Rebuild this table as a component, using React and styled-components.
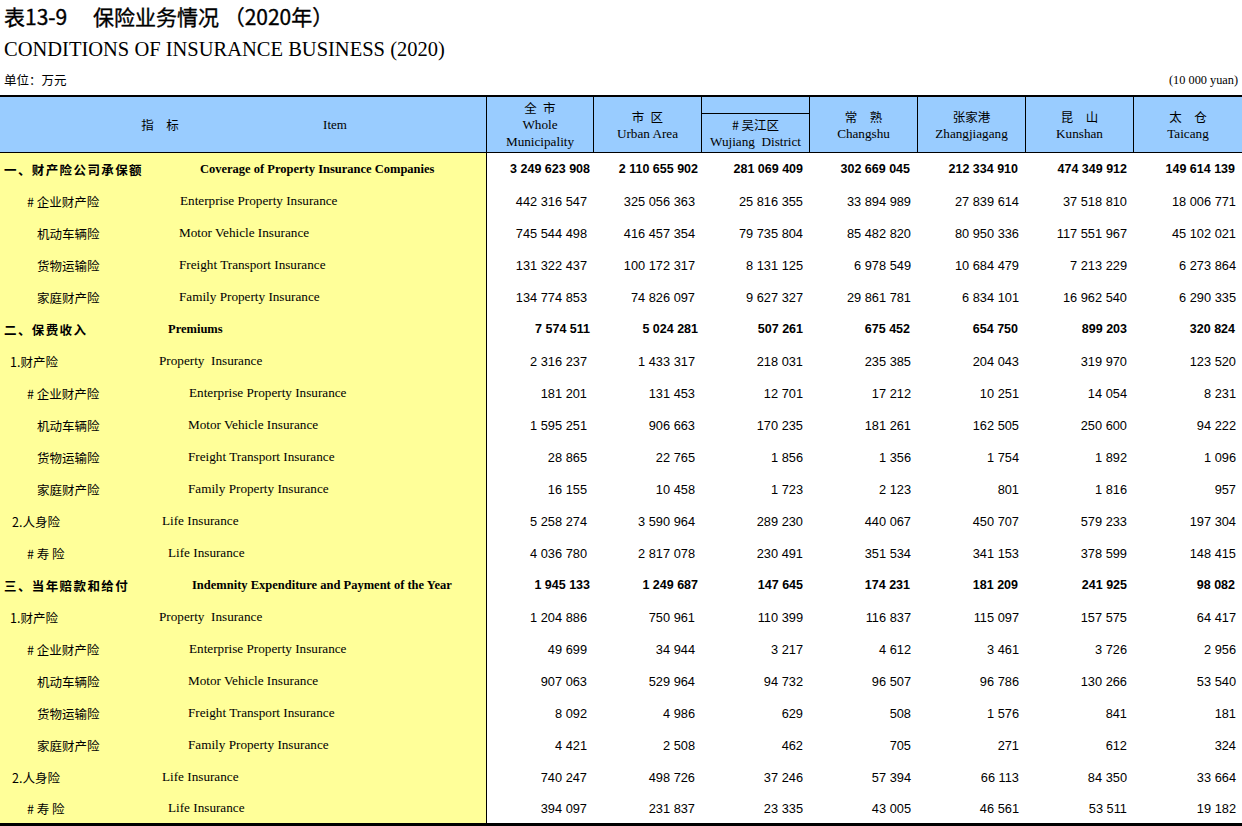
import React from "react";
import styled, { createGlobalStyle } from "styled-components";

const CJK = `"Noto Sans CJK SC", "Noto Sans", sans-serif`;
const SERIF = `"Liberation Serif", "Times New Roman", serif`;
const SANS = `"Liberation Sans", Arial, sans-serif`;
const COLS = "487px 106px 108px 108px 108px 108px 108px 109px";

const GlobalStyle = createGlobalStyle`
  html, body { margin: 0; padding: 0; background: #fff; }
  body { font-family: ${SANS}; color: #000; overflow: hidden; }
`;

const Page = styled.div`
  width: 1242px;
  height: 826px;
  overflow: hidden;
`;

const TitleCn = styled.h1`
  margin: 0;
  height: 32px;
  box-sizing: border-box;
  padding: 5px 0 0 4px;
  font: 400 21px/22px ${CJK};
  -webkit-text-stroke: 0.35px #000;
  white-space: pre;
`;

const TitleEn = styled.h2`
  margin: 0;
  height: 31px;
  box-sizing: border-box;
  padding: 3px 0 0 4px;
  font: 400 20.5px/28px ${SERIF};
`;

const UnitRow = styled.div`
  display: flex;
  justify-content: space-between;
  height: 32px;
  box-sizing: border-box;
  padding: 9px 4px 0 4px;
  line-height: 16px;
`;

const UnitCn = styled.span`
  font-family: ${CJK};
  font-size: 12.5px;
`;

const UnitEn = styled.span`
  font-family: ${SERIF};
  font-size: 12.3px;
`;

const Table = styled.div`
  border-top: 2px solid #000;
  border-bottom: 3px solid #000;
`;

const HeadRow = styled.div`
  display: grid;
  grid-template-columns: ${COLS};
  height: 56px;
  box-sizing: border-box;
  border-bottom: 1px solid #000;
  background: #99ccff;
`;

const HeadLabel = styled.div`
  display: flex;
  align-items: center;
  border-right: 1px solid #000;
`;

const HeadLabelCn = styled.span`
  flex: 0 0 320px;
  text-align: center;
  font-family: ${CJK};
  font-size: 12.5px;
  white-space: pre;
`;

const HeadLabelEn = styled.span`
  flex: 0 0 30px;
  text-align: center;
  font-family: ${SERIF};
  font-size: 13px;
`;

const HeadCol = styled.div`
  display: flex;
  flex-direction: column;
  align-items: center;
  justify-content: center;
  text-align: center;
  line-height: 17px;
  border-left: ${(p) => (p.$first ? "none" : "1px solid #000")};
`;

const HeadSplit = styled.div`
  display: flex;
  flex-direction: column;
  border-left: 1px solid #000;
`;

const SplitTop = styled.div`
  height: 16px;
  border-bottom: 1px solid #000;
`;

const SplitBottom = styled.div`
  flex: 1;
  display: flex;
  flex-direction: column;
  align-items: center;
  justify-content: center;
  line-height: 17px;
`;

const HeadCn = styled.span`
  font-family: ${CJK};
  font-size: 12.5px;
  white-space: pre;
`;

const HeadEn = styled.span`
  font-family: ${SERIF};
  font-size: 13.2px;
  white-space: pre;
`;

const BodyRow = styled.div`
  display: grid;
  grid-template-columns: ${COLS};
  height: ${(p) => (p.$last ? 30 : 32)}px;
  font-weight: ${(p) => (p.$bold ? 700 : 400)};
`;

const LabelCell = styled.div`
  display: flex;
  align-items: center;
  background: #ffff99;
  border-right: 1px solid #000;
  white-space: pre;
`;

const CnLabel = styled.span`
  box-sizing: border-box;
  flex: 0 0 ${(p) => p.$en}px;
  padding-left: ${(p) => p.$indent}px;
  font-family: ${CJK};
  font-size: 12.5px;
  letter-spacing: ${(p) => (p.$bold ? "1.4px" : "0")};
`;

const EnLabel = styled.span`
  font-family: ${SERIF};
  font-size: ${(p) => (p.$bold ? "12.5px" : "13.2px")};
`;

const NumCell = styled.div`
  display: flex;
  align-items: center;
  justify-content: flex-end;
  padding-right: ${(p) => p.$pad}px;
  font-family: ${SANS};
  font-size: ${(p) => (p.$bold ? "12.5px" : "12.8px")};
  white-space: pre;
`;

const PADS = [6, 6, 6, 6, 6, 6, 6];
const BOLD_PADS = [3, 3, 6, 7, 7, 6, 7];

const ROWS = [
  { cn: "一、财产险公司承保额", en: "Coverage of Property Insurance Companies", ci: 4, ex: 200, bold: true,
    v: ["3 249 623 908", "2 110 655 902", "281 069 409", "302 669 045", "212 334 910", "474 349 912", "149 614 139"] },
  { cn: "# 企业财产险", en: "Enterprise Property Insurance", ci: 27, ex: 180,
    v: ["442 316 547", "325 056 363", "25 816 355", "33 894 989", "27 839 614", "37 518 810", "18 006 771"] },
  { cn: "机动车辆险", en: "Motor Vehicle Insurance", ci: 37, ex: 179,
    v: ["745 544 498", "416 457 354", "79 735 804", "85 482 820", "80 950 336", "117 551 967", "45 102 021"] },
  { cn: "货物运输险", en: "Freight Transport Insurance", ci: 37, ex: 179,
    v: ["131 322 437", "100 172 317", "8 131 125", "6 978 549", "10 684 479", "7 213 229", "6 273 864"] },
  { cn: "家庭财产险", en: "Family Property Insurance", ci: 37, ex: 179,
    v: ["134 774 853", "74 826 097", "9 627 327", "29 861 781", "6 834 101", "16 962 540", "6 290 335"] },
  { cn: "二、保费收入", en: "Premiums", ci: 4, ex: 168, bold: true,
    v: ["7 574 511", "5 024 281", "507 261", "675 452", "654 750", "899 203", "320 824"] },
  { cn: "1.财产险", en: "Property  Insurance", ci: 10, ex: 159,
    v: ["2 316 237", "1 433 317", "218 031", "235 385", "204 043", "319 970", "123 520"] },
  { cn: "# 企业财产险", en: "Enterprise Property Insurance", ci: 27, ex: 189,
    v: ["181 201", "131 453", "12 701", "17 212", "10 251", "14 054", "8 231"] },
  { cn: "机动车辆险", en: "Motor Vehicle Insurance", ci: 37, ex: 188,
    v: ["1 595 251", "906 663", "170 235", "181 261", "162 505", "250 600", "94 222"] },
  { cn: "货物运输险", en: "Freight Transport Insurance", ci: 37, ex: 188,
    v: ["28 865", "22 765", "1 856", "1 356", "1 754", "1 892", "1 096"] },
  { cn: "家庭财产险", en: "Family Property Insurance", ci: 37, ex: 188,
    v: ["16 155", "10 458", "1 723", "2 123", "801", "1 816", "957"] },
  { cn: "2.人身险", en: "Life Insurance", ci: 12, ex: 162,
    v: ["5 258 274", "3 590 964", "289 230", "440 067", "450 707", "579 233", "197 304"] },
  { cn: "# 寿 险", en: "Life Insurance", ci: 27, ex: 168,
    v: ["4 036 780", "2 817 078", "230 491", "351 534", "341 153", "378 599", "148 415"] },
  { cn: "三、当年赔款和给付", en: "Indemnity Expenditure and Payment of the Year", ci: 4, ex: 192, bold: true,
    v: ["1 945 133", "1 249 687", "147 645", "174 231", "181 209", "241 925", "98 082"] },
  { cn: "1.财产险", en: "Property  Insurance", ci: 10, ex: 159,
    v: ["1 204 886", "750 961", "110 399", "116 837", "115 097", "157 575", "64 417"] },
  { cn: "# 企业财产险", en: "Enterprise Property Insurance", ci: 27, ex: 189,
    v: ["49 699", "34 944", "3 217", "4 612", "3 461", "3 726", "2 956"] },
  { cn: "机动车辆险", en: "Motor Vehicle Insurance", ci: 37, ex: 188,
    v: ["907 063", "529 964", "94 732", "96 507", "96 786", "130 266", "53 540"] },
  { cn: "货物运输险", en: "Freight Transport Insurance", ci: 37, ex: 188,
    v: ["8 092", "4 986", "629", "508", "1 576", "841", "181"] },
  { cn: "家庭财产险", en: "Family Property Insurance", ci: 37, ex: 188,
    v: ["4 421", "2 508", "462", "705", "271", "612", "324"] },
  { cn: "2.人身险", en: "Life Insurance", ci: 12, ex: 162,
    v: ["740 247", "498 726", "37 246", "57 394", "66 113", "84 350", "33 664"] },
  { cn: "# 寿 险", en: "Life Insurance", ci: 27, ex: 168,
    v: ["394 097", "231 837", "23 335", "43 005", "46 561", "53 511", "19 182"] },
];

export default function App() {
  return (
    <Page>
      <GlobalStyle />
      <TitleCn>{"表13-9\u3000 保险业务情况 （2020年）"}</TitleCn>
      <TitleEn>CONDITIONS OF INSURANCE BUSINESS (2020)</TitleEn>
      <UnitRow>
        <UnitCn>单位：万元</UnitCn>
        <UnitEn>(10 000 yuan)</UnitEn>
      </UnitRow>
      <Table>
        <HeadRow>
          <HeadLabel>
            <HeadLabelCn>{"指\u3000标"}</HeadLabelCn>
            <HeadLabelEn>Item</HeadLabelEn>
          </HeadLabel>
          <HeadCol $first>
            <HeadCn>{"全\u2002市"}</HeadCn>
            <HeadEn>Whole</HeadEn>
            <HeadEn>Municipality</HeadEn>
          </HeadCol>
          <HeadCol>
            <HeadCn>{"市\u2002区"}</HeadCn>
            <HeadEn>Urban Area</HeadEn>
          </HeadCol>
          <HeadSplit>
            <SplitTop />
            <SplitBottom>
              <HeadCn># 吴江区</HeadCn>
              <HeadEn>Wujiang  District</HeadEn>
            </SplitBottom>
          </HeadSplit>
          <HeadCol>
            <HeadCn>{"常\u3000熟"}</HeadCn>
            <HeadEn>Changshu</HeadEn>
          </HeadCol>
          <HeadCol>
            <HeadCn>张家港</HeadCn>
            <HeadEn>Zhangjiagang</HeadEn>
          </HeadCol>
          <HeadCol>
            <HeadCn>{"昆\u3000山"}</HeadCn>
            <HeadEn>Kunshan</HeadEn>
          </HeadCol>
          <HeadCol>
            <HeadCn>{"太\u3000仓"}</HeadCn>
            <HeadEn>Taicang</HeadEn>
          </HeadCol>
        </HeadRow>
        {ROWS.map((r, i) => (
          <BodyRow key={i} $bold={r.bold} $last={i === ROWS.length - 1}>
            <LabelCell>
              <CnLabel $indent={r.ci} $en={r.ex} $bold={r.bold}>{r.cn}</CnLabel>
              <EnLabel $bold={r.bold}>{r.en}</EnLabel>
            </LabelCell>
            {r.v.map((val, j) => (
              <NumCell key={j} $bold={r.bold} $pad={r.bold ? BOLD_PADS[j] : PADS[j]}>
                {val}
              </NumCell>
            ))}
          </BodyRow>
        ))}
      </Table>
    </Page>
  );
}
